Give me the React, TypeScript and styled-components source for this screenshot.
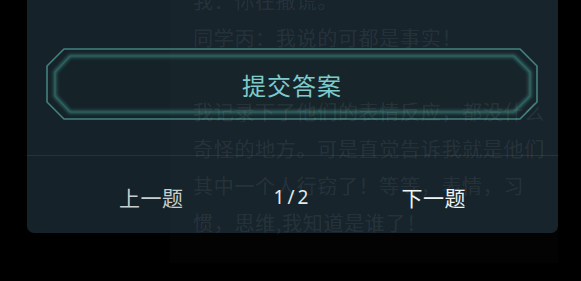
import React from "react";
import styled, { createGlobalStyle } from "styled-components";

const GlobalStyle = createGlobalStyle`
  html, body {
    margin: 0;
    padding: 0;
    background: #000;
  }
  body {
    font-family: "Noto Sans CJK SC", "Noto Sans", sans-serif;
  }
`;

const storyLines = [
  "我：你在撒谎。",
  "同学丙：我说的可都是事实！",
  "",
  "我记录下了他们的表情反应，都没什么",
  "奇怪的地方。可是直觉告诉我就是他们",
  "其中一个人行窃了！等等，表情，习",
  "惯，思维,我知道是谁了！",
];

function FrameIcon() {
  return (
    <Frame viewBox="0 0 492 72" width="492" height="72" aria-hidden>
      <defs>
        <filter id="glow" x="-5%" y="-20%" width="110%" height="140%">
          <feGaussianBlur stdDeviation="1.6" />
        </filter>
      </defs>
      <path
        d="M18 1 H474 L491 18 V54 L474 71 H18 L1 54 V18 Z"
        fill="#152329"
        stroke="#41817f"
        strokeWidth="1.6"
      />
      <path
        d="M24 8 H468 L484 24 V48 L468 64 H24 L9 48 V24 Z"
        fill="none"
        stroke="#2b5e5c"
        strokeWidth="3.5"
        filter="url(#glow)"
      />
      <path
        d="M24 8 H468 L484 24 V48 L468 64 H24 L9 48 V24 Z"
        fill="none"
        stroke="#2f6361"
        strokeWidth="1.2"
      />
    </Frame>
  );
}

export default function App() {
  return (
    <>
      <GlobalStyle />
      <Stage>
        <Panel>
          <SubmitButton type="button">
            <FrameIcon />
            <SubmitLabel>提交答案</SubmitLabel>
          </SubmitButton>
          <NavRow>
            <NavButton type="button" $dim>
              上一题
            </NavButton>
            <Counter>1/2</Counter>
            <NavButton type="button">下一题</NavButton>
          </NavRow>
        </Panel>
        <Ghost>
          {storyLines.map((line, i) => (
            <GhostLine key={i}>{line || "\u00a0"}</GhostLine>
          ))}
        </Ghost>
      </Stage>
    </>
  );
}

const Stage = styled.div`
  position: relative;
  width: 581px;
  height: 281px;
  overflow: hidden;
  background: #000;
`;

const Panel = styled.div`
  margin-left: 27px;
  width: 531px;
  height: 233px;
  box-sizing: border-box;
  padding-top: 48px;
  background: #15222a;
  border-radius: 0 0 7px 7px;
  display: flex;
  flex-direction: column;
`;

const SubmitButton = styled.button`
  position: relative;
  margin: 0 19px;
  width: 492px;
  height: 72px;
  padding: 0;
  border: none;
  background: none;
  display: flex;
  align-items: center;
  justify-content: center;
  cursor: pointer;
`;

const Frame = styled.svg`
  position: absolute;
  inset: 0;
`;

const SubmitLabel = styled.span`
  position: relative;
  font-family: "Noto Sans CJK SC", sans-serif;
  font-size: 24px;
  letter-spacing: 1px;
  color: #7ccbcb;
  line-height: 1;
  margin-top: 1px;
`;

const NavRow = styled.div`
  margin-top: 35px;
  border-top: 1px solid #25343a;
  flex: 1;
  display: flex;
  align-items: center;
  justify-content: center;
  gap: 90px;
  padding-top: 4px;
`;

const NavButton = styled.button<{ $dim?: boolean }>`
  border: none;
  background: none;
  padding: 0;
  font-family: "Noto Sans CJK SC", sans-serif;
  font-size: 21px;
  letter-spacing: 0.5px;
  color: ${(p) => (p.$dim ? "#c6cfcf" : "#eef3f3")};
  cursor: pointer;
`;

const Counter = styled.span`
  font-family: "Noto Sans", sans-serif;
  font-size: 19px;
  letter-spacing: 3px;
  color: #e4eaea;
`;

const Ghost = styled.div`
  position: absolute;
  left: 170px;
  top: 0;
  width: 388px;
  height: 281px;
  box-sizing: border-box;
  padding: 0 0 0 23px;
  background: rgba(255, 255, 255, 0.012);
  pointer-events: none;
  display: flex;
  flex-direction: column;
  margin-top: -18px;
`;

const GhostLine = styled.div`
  font-family: "Noto Sans CJK SC", sans-serif;
  font-size: 20px;
  letter-spacing: 0.7px;
  line-height: 37px;
  white-space: nowrap;
  color: rgba(255, 255, 255, 0.085);
`;
